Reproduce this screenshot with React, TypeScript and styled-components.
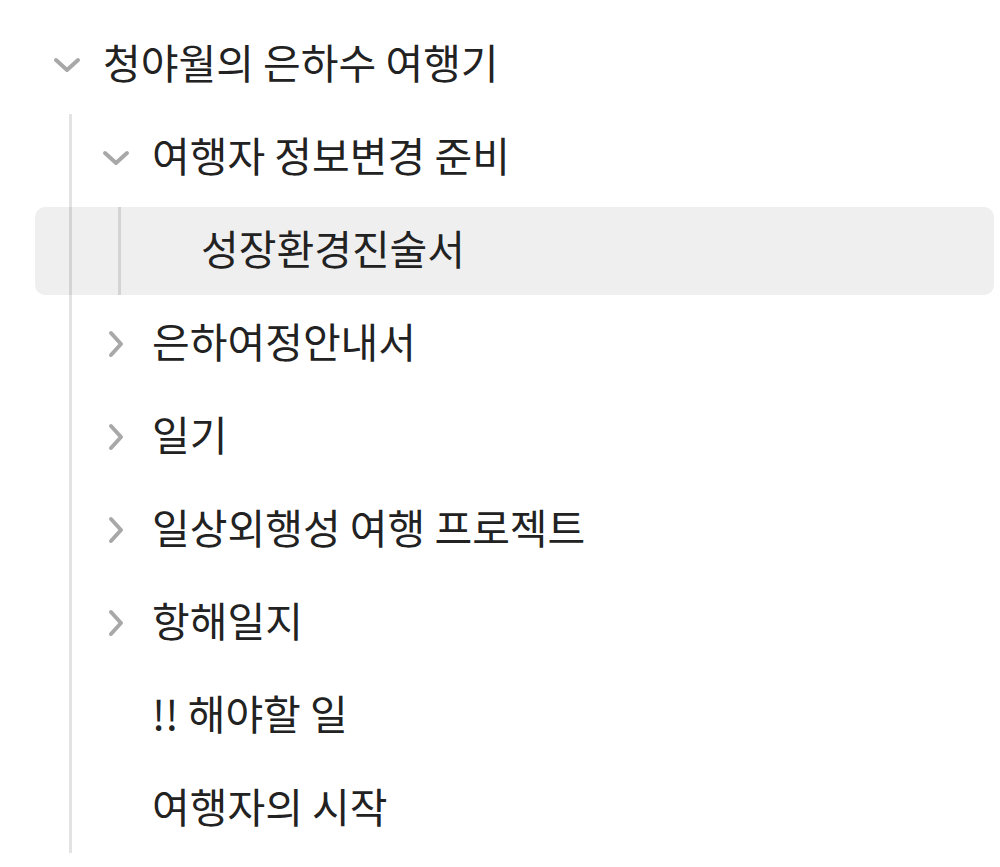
import { createGlobalStyle } from "styled-components";
import styled from "styled-components";

const GlobalStyle = createGlobalStyle`
  html, body {
    margin: 0;
    padding: 0;
    background: #ffffff;
  }
  body {
    font-family: "Noto Sans CJK KR", "Noto Sans", sans-serif;
    color: #222222;
  }
`;

const Tree = styled.div`
  width: 959px;
  padding: 21px 0 0 35px;
`;

const Row = styled.div<{ $depth: number; $active?: boolean }>`
  display: flex;
  align-items: center;
  height: 88px;
  margin-bottom: 5px;
  padding-left: ${(p) => 14 + p.$depth * 49}px;
  border-radius: 10px;
  background: ${(p) => (p.$active ? "#efefef" : "transparent")};
`;

const Toggle = styled.span`
  width: 36px;
  height: 36px;
  display: flex;
  align-items: center;
  justify-content: center;
  flex-shrink: 0;
`;

const Label = styled.span`
  margin-left: 18px;
  margin-bottom: 8px;
  font-size: 41px;
  line-height: 1;
  white-space: nowrap;
`;

const Children = styled.div`
  position: relative;
`;

const Guide = styled.span<{ $left: number }>`
  position: absolute;
  top: 0;
  bottom: 0;
  left: ${(p) => p.$left}px;
  width: 3px;
  background: rgba(0, 0, 0, 0.11);
  z-index: 1;
`;

function Chevron({ open }: { open: boolean }) {
  return open ? (
    <svg width="28" height="16" viewBox="0 0 28 16">
      <polyline points="3,3 14,13 25,3" fill="none" stroke="#a8a8a8" strokeWidth="4" strokeLinecap="round" strokeLinejoin="round" />
    </svg>
  ) : (
    <svg width="16" height="28" viewBox="0 0 16 28">
      <polyline points="3,3 13,14 3,25" fill="none" stroke="#a8a8a8" strokeWidth="4" strokeLinecap="round" strokeLinejoin="round" />
    </svg>
  );
}

interface Node {
  title: string;
  open?: boolean;
  toggle?: boolean;
  active?: boolean;
  children?: Node[];
}

const data: Node = {
  title: "청야월의 은하수 여행기",
  toggle: true,
  open: true,
  children: [
    {
      title: "여행자 정보변경 준비",
      toggle: true,
      open: true,
      children: [{ title: "성장환경진술서", active: true }],
    },
    { title: "은하여정안내서", toggle: true },
    { title: "일기", toggle: true },
    { title: "일상외행성 여행 프로젝트", toggle: true },
    { title: "항해일지", toggle: true },
    { title: "!! 해야할 일" },
    { title: "여행자의 시작" },
  ],
};

function TreeItem({ node, depth }: { node: Node; depth: number }) {
  return (
    <>
      <Row $depth={depth} $active={node.active}>
        <Toggle>{node.toggle && <Chevron open={!!node.open} />}</Toggle>
        <Label>{node.title}</Label>
      </Row>
      {node.open && node.children && (
        <Children>
          <Guide $left={34 + depth * 49} />
          {node.children.map((c) => (
            <TreeItem key={c.title} node={c} depth={depth + 1} />
          ))}
        </Children>
      )}
    </>
  );
}

export default function App() {
  return (
    <>
      <GlobalStyle />
      <Tree>
        <TreeItem node={data} depth={0} />
      </Tree>
    </>
  );
}
